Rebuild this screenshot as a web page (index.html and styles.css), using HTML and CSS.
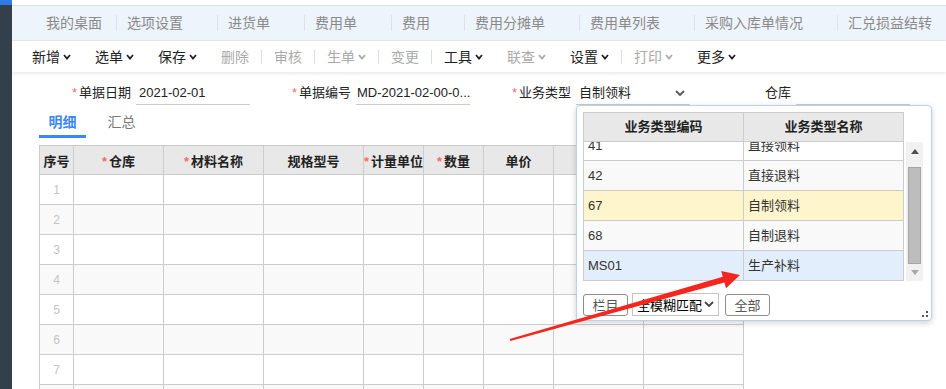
FILE: index.html
```html
<!DOCTYPE html>
<html lang="zh-CN">
<head>
    <meta charset="UTF-8">
    <title>费用单</title>
    <link rel="stylesheet" href="styles.css">
</head>
<body>
    <div class="app">
        <aside class="side"><div class="side-top"></div></aside>
        <main class="main">
            <div class="strip"></div>
            <nav class="tabs">
                <span class="tab tab-home">我的桌面</span>
                <span class="tab">选项设置</span>
                <span class="tab">进货单</span>
                <span class="tab">费用单</span>
                <span class="tab">费用</span>
                <span class="tab">费用分摊单</span>
                <span class="tab">费用单列表</span>
                <span class="tab">采购入库单情况</span>
                <span class="tab">汇兑损益结转</span>
            </nav>
            <div class="toolbar">
                <span class="tool">新增<svg class="chev" viewBox="0 0 8 6"><polyline points="1,1 4,4.5 7,1"/></svg></span>
                <span class="tool">选单<svg class="chev" viewBox="0 0 8 6"><polyline points="1,1 4,4.5 7,1"/></svg></span>
                <span class="tool">保存<svg class="chev" viewBox="0 0 8 6"><polyline points="1,1 4,4.5 7,1"/></svg></span>
                <span class="tool off">删除</span>
                <span class="tsep"></span>
                <span class="tool off">审核</span>
                <span class="tsep"></span>
                <span class="tool off">生单<svg class="chev" viewBox="0 0 8 6"><polyline points="1,1 4,4.5 7,1"/></svg></span>
                <span class="tsep"></span>
                <span class="tool off">变更</span>
                <span class="tsep"></span>
                <span class="tool">工具<svg class="chev" viewBox="0 0 8 6"><polyline points="1,1 4,4.5 7,1"/></svg></span>
                <span class="tool off">联查<svg class="chev" viewBox="0 0 8 6"><polyline points="1,1 4,4.5 7,1"/></svg></span>
                <span class="tool">设置<svg class="chev" viewBox="0 0 8 6"><polyline points="1,1 4,4.5 7,1"/></svg></span>
                <span class="tsep"></span>
                <span class="tool off">打印<svg class="chev" viewBox="0 0 8 6"><polyline points="1,1 4,4.5 7,1"/></svg></span>
                <span class="tool">更多<svg class="chev" viewBox="0 0 8 6"><polyline points="1,1 4,4.5 7,1"/></svg></span>
            </div>

            <section class="content">
                <div class="fields">
                    <div class="field">
                        <label class="flabel"><i class="req">*</i>单据日期</label>
                        <div class="finput">2021-02-01</div>
                    </div>
                    <div class="field">
                        <label class="flabel"><i class="req">*</i>单据编号</label>
                        <div class="finput finput-tight">MD-2021-02-00-0...</div>
                    </div>
                    <div class="field">
                        <label class="flabel"><i class="req">*</i>业务类型</label>
                        <div class="finput finput-drop">
                            <span>自制领料</span>
                            <svg class="dchev" viewBox="0 0 10 7"><polyline points="1,1 5,5 9,1"/></svg>

                            <div class="dropdown">
                                <div class="dd-main">
                                    <div class="dd-grid">
                                        <div class="dd-head">
                                            <div class="dd-cell">业务类型编码</div>
                                            <div class="dd-cell">业务类型名称</div>
                                        </div>
                                        <div class="dd-body">
                                            <div class="dd-row dd-first">
                                                <div class="dd-cell">41</div>
                                                <div class="dd-cell">直接领料</div>
                                            </div>
                                            <div class="dd-row alt">
                                                <div class="dd-cell">42</div>
                                                <div class="dd-cell">直接退料</div>
                                            </div>
                                            <div class="dd-row cur">
                                                <div class="dd-cell">67</div>
                                                <div class="dd-cell">自制领料</div>
                                            </div>
                                            <div class="dd-row alt">
                                                <div class="dd-cell">68</div>
                                                <div class="dd-cell">自制退料</div>
                                            </div>
                                            <div class="dd-row hover">
                                                <div class="dd-cell">MS01</div>
                                                <div class="dd-cell">生产补料</div>
                                            </div>
                                        </div>
                                    </div>
                                    <div class="dd-scroll">
                                        <svg class="sb-up" viewBox="0 0 8 5"><polygon points="0,5 4,0 8,5"/></svg>
                                        <div class="sb-thumb"></div>
                                        <svg class="sb-down" viewBox="0 0 8 5"><polygon points="0,0 8,0 4,5"/></svg>
                                    </div>
                                </div>
                                <div class="dd-foot">
                                    <button class="dd-btn">栏目</button>
                                    <div class="dd-select">
                                        <span>全模糊匹配</span>
                                        <svg class="schev" viewBox="0 0 10 7"><polyline points="1,1 5,5 9,1"/></svg>
                                    </div>
                                    <button class="dd-btn">全部</button>
                                </div>
                                <svg class="dd-grip" viewBox="0 0 6 6">
                                    <rect x="4" y="0" width="2" height="2"/>
                                    <rect x="0" y="4" width="2" height="2"/>
                                    <rect x="4" y="4" width="2" height="2"/>
                                </svg>
                            </div>
                        </div>
                    </div>
                    <div class="field">
                        <label class="flabel">仓库</label>
                        <div class="finput"></div>
                    </div>
                </div>

                <div class="subtabs">
                    <span class="subtab on">明细</span>
                    <span class="subtab">汇总</span>
                </div>

                <table class="grid">
                    <colgroup>
                        <col style="width:34px"><col style="width:90px"><col style="width:100px">
                        <col style="width:100px"><col style="width:60px"><col style="width:60px">
                        <col style="width:70px"><col style="width:90px"><col style="width:100px">
                    </colgroup>
                    <thead>
                        <tr>
                            <th>序号</th>
                            <th><i class="req">*</i>仓库</th>
                            <th><i class="req">*</i>材料名称</th>
                            <th>规格型号</th>
                            <th><i class="req">*</i>计量单位</th>
                            <th><i class="req">*</i>数量</th>
                            <th>单价</th>
                            <th></th>
                            <th></th>
                        </tr>
                    </thead>
                    <tbody>
                        <tr><td class="num">1</td><td></td><td></td><td></td><td></td><td></td><td></td><td></td><td></td></tr>
                        <tr><td class="num">2</td><td></td><td></td><td></td><td></td><td></td><td></td><td></td><td></td></tr>
                        <tr><td class="num">3</td><td></td><td></td><td></td><td></td><td></td><td></td><td></td><td></td></tr>
                        <tr><td class="num">4</td><td></td><td></td><td></td><td></td><td></td><td></td><td></td><td></td></tr>
                        <tr><td class="num">5</td><td></td><td></td><td></td><td></td><td></td><td></td><td></td><td></td></tr>
                        <tr><td class="num">6</td><td></td><td></td><td></td><td></td><td></td><td></td><td></td><td></td></tr>
                        <tr><td class="num">7</td><td></td><td></td><td></td><td></td><td></td><td></td><td></td><td></td></tr>
                        <tr><td class="num">8</td><td></td><td></td><td></td><td></td><td></td><td></td><td></td><td></td></tr>
                    </tbody>
                </table>
            </section>
        </main>
    </div>

    <svg class="arrow" viewBox="0 0 946 389">
        <polygon points="509.7,339 722.8,276.7 721.2,271 740,275 726,288.3 724.4,282.5 510.3,341"/>
    </svg>
</body>
</html>
```

FILE: styles.css
```css
* {
    box-sizing: border-box;
}
html, body {
    margin: 0;
    height: 100%;
    overflow: hidden;
}
body {
    position: relative;
    font-family: "Liberation Sans", "Noto Sans CJK SC", sans-serif;
    font-size: 13px;
    color: #222;
    background: #fff;
}
.app {
    display: flex;
    height: 100%;
}
.side {
    width: 12px;
    flex: none;
    background: #343f4c;
}
.side-top {
    height: 5px;
    background: #2e7be6;
}
.main {
    flex: 1;
    min-width: 0;
}
.strip {
    height: 6px;
    border-bottom: 1px solid #d9dee6;
}

/* top tabs */
.tabs {
    display: flex;
    align-items: center;
    height: 35px;
    padding-left: 24px;
    background: #eef4fc;
    border-bottom: 1px solid #e2e8f0;
    white-space: nowrap;
}
.tab {
    padding: 0 34px 0 10px;
    font-size: 14px;
    line-height: 16px;
    color: #8a8a8a;
    border-left: 1px solid #dde3eb;
}
.tab-home {
    padding-right: 14px;
    border-left: 0;
}

/* toolbar */
.toolbar {
    position: relative;
    z-index: 1;
    display: flex;
    align-items: center;
    height: 31px;
    padding-left: 8px;
    background: #fff;
    box-shadow: 0 2px 3px rgba(0, 0, 0, 0.08);
}
.tool {
    display: flex;
    align-items: center;
    padding: 0 12px;
    font-size: 14px;
    line-height: 20px;
    color: #222;
}
.tool.off {
    color: #aaa;
}
.chev {
    width: 8px;
    height: 6px;
    margin-left: 3px;
    fill: none;
    stroke: currentColor;
    stroke-width: 1.8;
}
.tsep {
    width: 1px;
    height: 14px;
    background: #ddd;
}

/* header fields */
.fields {
    display: flex;
    padding: 10px 0 0 18px;
}
.field {
    display: flex;
    width: 220px;
    height: 23px;
}
.flabel {
    flex: 1;
    text-align: right;
    padding-right: 5px;
    line-height: 22px;
    font-size: 13px;
    color: #222;
}
.req {
    color: #f56c6c;
    font-style: normal;
    margin-right: 2px;
}
.finput {
    position: relative;
    width: 114px;
    padding-left: 3px;
    line-height: 22px;
    font-size: 13px;
    border-bottom: 1px solid #ccc;
    white-space: nowrap;
}
.finput-tight {
    padding-left: 1px;
}
.finput-drop {
    display: flex;
    justify-content: space-between;
    align-items: center;
}
.dchev {
    width: 10px;
    height: 7px;
    margin-right: 5px;
    fill: none;
    stroke: #555;
    stroke-width: 1.8;
}

/* dropdown */
.dropdown {
    position: absolute;
    left: 0;
    top: calc(100% + 1px);
    z-index: 5;
    width: 356px;
    height: 216px;
    padding: 6px;
    background: #fff;
    border: 1px solid #bcd0ea;
    border-radius: 4px;
    box-shadow: 0 2px 6px rgba(0, 0, 0, 0.18);
    line-height: normal;
}
.dd-main {
    display: flex;
}
.dd-grid {
    width: 321px;
    color: #333;
    font-size: 13px;
}
.dd-head {
    display: flex;
    height: 30px;
    background: #e8e8e8;
    border: 1px solid #ccc;
    font-weight: bold;
    color: #222;
}
.dd-head .dd-cell {
    text-align: center;
    line-height: 28px;
    padding: 0;
}
.dd-cell {
    width: 159px;
    padding-left: 4px;
    line-height: 29px;
}
.dd-cell + .dd-cell {
    flex: 1;
    border-left: 1px solid #ccc;
}
.dd-body {
    height: 139px;
    overflow: hidden;
    border: 1px solid #ccc;
    border-top: 0;
}
.dd-row {
    display: flex;
    height: 30px;
    border-bottom: 1px solid #ccc;
    background: #fff;
}
.dd-first {
    margin-top: -11px;
}
.dd-row.alt {
    background: #f9f9f9;
}
.dd-row.cur {
    background: #fff5cc;
}
.dd-row.hover {
    background: #e3eefc;
}
.dd-scroll {
    display: flex;
    flex-direction: column;
    align-items: center;
    width: 17px;
    height: 139px;
    margin: 30px 0 0 2px;
    background: #f1f1f1;
}
.sb-up, .sb-down {
    width: 8px;
    height: 5px;
}
.sb-up {
    margin-top: 7px;
    fill: #505050;
}
.sb-thumb {
    width: 13px;
    height: 97px;
    margin-top: 13px;
    background: #bdbdbd;
    border: 1px solid #a6a6a6;
}
.sb-down {
    margin-top: 6px;
    fill: #a8a8a8;
}
.dd-foot {
    display: flex;
    align-items: center;
    margin-top: 12px;
}
.dd-btn {
    width: 45px;
    height: 22px;
    padding: 0;
    background: #fff;
    border: 1px solid #8c8c8c;
    border-radius: 3px;
    font-family: inherit;
    font-size: 13px;
    color: #555;
}
.dd-select {
    display: flex;
    align-items: center;
    justify-content: space-between;
    width: 87px;
    height: 23px;
    margin: 0 6px 0 4px;
    padding: 0 4px;
    border: 1px solid #c4c4c4;
    font-size: 13px;
    color: #000;
}
.schev {
    width: 10px;
    height: 7px;
    fill: none;
    stroke: #444;
    stroke-width: 1.8;
}
.dd-grip {
    position: absolute;
    right: 3px;
    bottom: 3px;
    width: 6px;
    height: 6px;
    fill: #555;
}

/* detail tabs */
.subtabs {
    display: flex;
    gap: 12px;
    height: 28px;
    margin: 5px 0 0 27px;
}
.subtab {
    width: 47px;
    text-align: center;
    font-size: 14px;
    line-height: 25px;
    color: #777;
    border-bottom: 3px solid transparent;
}
.subtab.on {
    color: #3b87f5;
    font-weight: bold;
    border-color: #3b87f5;
}

/* detail grid */
.grid {
    width: 705px;
    margin: 7px 0 0 27px;
    border-collapse: collapse;
    table-layout: fixed;
}
.grid th, .grid td {
    padding: 0;
    border: 1px solid #ccc;
}
.grid th {
    height: 29px;
    background: #e8e8e8;
    font-size: 13px;
    font-weight: bold;
    text-align: center;
    white-space: nowrap;
}
.grid td {
    height: 30px;
}
.grid tbody tr:nth-child(even) td {
    background: #f9f9f9;
}
.grid .num {
    text-align: center;
    font-size: 12px;
    color: #c4c4c4;
}

/* annotation arrow */
.arrow {
    position: absolute;
    left: 0;
    top: 0;
    width: 946px;
    height: 389px;
    z-index: 10;
    pointer-events: none;
    fill: #f5261e;
}
```
